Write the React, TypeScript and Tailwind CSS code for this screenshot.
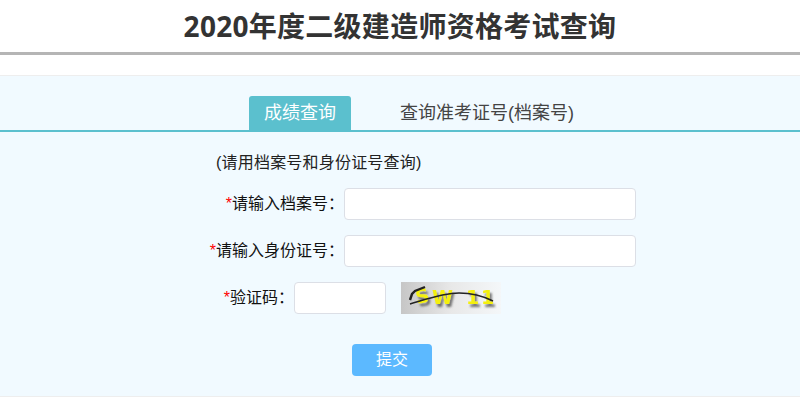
import { useState } from 'react';

const fontStack = '[font-family:"Liberation_Sans","Noto_Sans_CJK_SC",sans-serif]';

function Captcha() {
  return (
    <svg className="ml-[15px] h-[32px] w-[100px]" viewBox="0 0 100 32">
      <defs>
        <linearGradient id="captchaBg" x1="0" y1="0" x2="1" y2="0">
          <stop offset="0" stopColor="#c6c6c6" />
          <stop offset="0.5" stopColor="#e8e8e8" />
          <stop offset="1" stopColor="#f4f7f9" />
        </linearGradient>
        <filter id="captchaShadow" x="-30%" y="-30%" width="160%" height="160%">
          <feDropShadow dx="2" dy="3" stdDeviation="1.3" floodColor="#555" floodOpacity="0.8" />
        </filter>
      </defs>
      <rect width="100" height="32" fill="url(#captchaBg)" />
      <text
        y="22"
        x="16 31 65 80"
        rotate="-12 0 0 0"
        fontFamily="DejaVu Sans"
        fontWeight="700"
        fontSize="19"
        fill="#f4f010"
        filter="url(#captchaShadow)"
      >
        SW11
      </text>
      <path d="M24 5 L14 9 L11 12 L9 18" fill="none" stroke="#222" strokeWidth="2.4" />
      <path d="M9 22 C26 17 42 11 58 11 C72 11 84 15 92 19" fill="none" stroke="#222" strokeWidth="1.4" />
    </svg>
  );
}

function FormRow({ label, labelWidth, children }: { label: string; labelWidth: string; children?: React.ReactNode }) {
  return (
    <div className="flex h-[32px] items-center">
      <label className={`shrink-0 text-right text-[16px] text-[#111] ${labelWidth}`}>
        <span className="text-[#f00]">*</span>
        {label}：
      </label>
      {children}
    </div>
  );
}

export default function App() {
  const [tab, setTab] = useState<'score' | 'number'>('score');

  return (
    <div className={`h-[400px] w-[800px] overflow-hidden bg-white ${fontStack}`}>
      {/* Title */}
      <div className="h-[55px] border-b-[3px] border-[#b5b5b5]">
        <h1 className="pt-[8px] text-center text-[28px] leading-[36px] font-bold tracking-[0.28px] text-[#333] [font-family:'Open_Sans','Noto_Sans_CJK_SC',sans-serif]">
          2020年度二级建造师资格考试查询
        </h1>
      </div>

      {/* Panel */}
      <div className="mt-[20px] h-[322px] border-y border-[#eeeeee] bg-[#f1faff]">
        {/* Tabs */}
        <div className="mt-[20px] flex h-[36px] border-b-2 border-[#5bc0ce] pl-[249px]">
          <button
            onClick={() => setTab('score')}
            className="h-[34px] w-[102px] rounded-t-[3px] bg-[#5bc0ce] text-[18px] text-white"
          >
            成绩查询
          </button>
          <button
            onClick={() => setTab('number')}
            className="ml-[49px] h-[34px] text-[18px] text-[#444]"
          >
            查询准考证号(档案号)
          </button>
        </div>

        {/* Form */}
        <p className="mt-[21px] h-[20px] pl-[216px] text-[16px] leading-[20px] tracking-[0.2px] text-[#222]">
          {tab === 'score' ? '(请用档案号和身份证号查询)' : '(请用姓名和身份证号查询)'}
        </p>
        <div className="mt-[15px] flex flex-col gap-[15px]">
          <FormRow label="请输入档案号" labelWidth="w-[344px]">
            <input className="h-[32px] w-[292px] rounded-[4px] border border-[#dcdfe6] bg-white outline-none" />
          </FormRow>
          <FormRow label="请输入身份证号" labelWidth="w-[344px]">
            <input className="h-[32px] w-[292px] rounded-[4px] border border-[#dcdfe6] bg-white outline-none" />
          </FormRow>
          <FormRow label="验证码" labelWidth="w-[294px]">
            <input className="h-[32px] w-[92px] rounded-[4px] border border-[#dcdfe6] bg-white outline-none" />
            <Captcha />
          </FormRow>
        </div>
        <div className="mt-[30px] flex pl-[352px]">
          <button className="h-[32px] w-[80px] rounded-[4px] bg-[#5cb9ff] text-[16px] text-white">提交</button>
        </div>
      </div>
    </div>
  );
}
